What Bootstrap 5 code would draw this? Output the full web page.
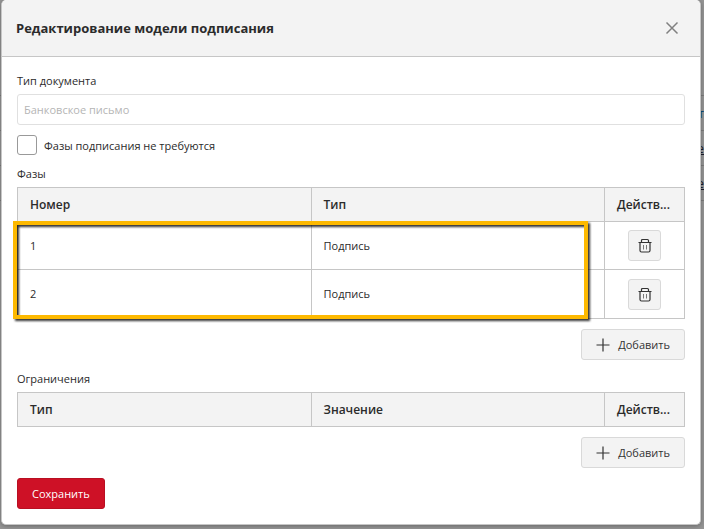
<!DOCTYPE html>
<html lang="ru">
<head>
<meta charset="utf-8">
<meta name="viewport" content="width=device-width, initial-scale=1">
<title>Редактирование модели подписания</title>
<link href="https://cdn.jsdelivr.net/npm/bootstrap@5.3.0/dist/css/bootstrap.min.css" rel="stylesheet">
<style>
  body { font-family: "Open Sans", "Noto Sans", sans-serif; font-size: 11px; line-height: 18px; color: #2b2b2b; background: #949494; min-height: 100vh; }
  .page-rows { position: absolute; inset: 95px 0 auto 0; color: #1b1b2b; font-size: 12px; }
  .page-line { height: 35px; border-top: 1px solid #7c7c7c; padding-top: 9px; }
  .page-line a { color: #1b1b2b; }
  .page-line:first-child a { color: #0d4a75; text-decoration: none; }
  .page-line:last-child { height: 1px; padding: 0; }
  .dialog-box { position: relative; margin: 0 3px 0 1px; width: auto; background: #fff; border: 1px solid #c6c6c6; border-top: 0; border-radius: 5px; box-shadow: 0 1px 4px rgba(0,0,0,.3); color: #2b2b2b; }
  .dialog-head { height: 57px; padding: 0 20px 0 14px; background: #f3f3f3; border-bottom: 1px solid #c6c6c6; border-radius: 5px 5px 0 0; }
  .dialog-title { font-size: 13px; line-height: 20px; font-weight: 700; }
  .close-btn, .close-btn:hover { color: #808080; line-height: 0; }
  .dialog-main { padding: 15px; }
  .doc-input.form-control { height: 31px; font-size: 11px; padding: 0 6px; border: 1px solid #e0e0e0; border-radius: 3px; background: #fff; color: #b5b5b5; }
  .check-line { gap: 7px; margin: 9px 0 10px; }
  .check-line label { padding-top: 3px; }
  .phase-check.form-check-input { width: 20px; height: 20px; margin: 0; border: 1px solid #999; border-radius: 3px; }
  .grid.table { table-layout: fixed; margin: 0; color: #2b2b2b; border-color: #c6c6c6; font-size: 11px; }
  .grid th, .grid td { padding: 0 12px; vertical-align: middle; border: 1px solid #c6c6c6; background: #fff; }
  .grid thead th { height: 34px; background: #f3f3f3; font-size: 12px; font-weight: 600; }
  .grid td { height: 48px; }
  .grid tr:last-child td { height: 49px; }
  .grid thead .cut-head { padding-right: 0; }
  .col-act { width: 80px; }
  .btn-soft { background: #f3f3f3; border: 1px solid #d9d9d9; border-radius: 3px; color: #333; font-size: 11px; line-height: 18px; }
  .btn-icon { width: 33px; height: 31px; padding: 0; }
  .btn-icon svg { display: block; margin: auto; }
  .btn-add { height: 31px; padding: 0 14px; }
  .btn-save { height: 31px; padding: 0 14px; font-size: 11px; line-height: 18px; color: #fff; background: #ce1126; border: 1px solid #b90f22; border-radius: 3px; }
  .add-line { margin: 10px 0; }
  .frame { position: absolute; left: -4px; right: 97px; top: 34px; bottom: 0; border: 4px solid #fdb900; filter: drop-shadow(2px 2px 1px rgba(0,0,0,.8)); pointer-events: none; }
</style>
</head>
<body>
<div class="page-rows">
  <div class="page-line d-flex justify-content-end"><a href="#">т</a></div>
  <div class="page-line d-flex justify-content-end"><a href="#">е</a></div>
  <div class="page-line d-flex justify-content-end"><a href="#">е</a></div>
  <div class="page-line"></div>
</div>
<div class="modal-content dialog-box" role="dialog" aria-labelledby="dlg-title">
  <div class="modal-header dialog-head">
    <h1 class="modal-title dialog-title" id="dlg-title">Редактирование модели подписания</h1>
    <button type="button" class="btn p-0 border-0 close-btn" aria-label="Закрыть">
      <svg width="16" height="16" viewBox="0 0 16 16" fill="none" stroke="currentColor" stroke-width="1.5"><path d="M2.5 2.5l11 11M13.5 2.5l-11 11"/></svg>
    </button>
  </div>
  <div class="modal-body dialog-main">
    <label for="doc-type" class="d-block mb-1">Тип документа</label>
    <input id="doc-type" type="text" class="form-control doc-input" value="Банковское письмо" disabled>
    <div class="d-flex align-items-center check-line">
      <input class="form-check-input phase-check" type="checkbox" id="no-phases">
      <label for="no-phases">Фазы подписания не требуются</label>
    </div>
    <div class="mb-1">Фазы</div>
    <div class="position-relative">
      <table class="table grid">
        <colgroup><col><col><col class="col-act"></colgroup>
        <thead><tr><th>Номер</th><th>Тип</th><th class="cut-head">Действ...</th></tr></thead>
        <tbody>
          <tr><td>1</td><td>Подпись</td><td class="text-center"><button type="button" class="btn btn-soft btn-icon" aria-label="Удалить"><svg width="14" height="15" viewBox="0 0 14 15" fill="none" stroke="#333"><path d="M.5 4.500h13M3.500 4V2.500q0-1 1-1h5q1 0 1 1V4M2 5v7.500q0 1.500 1.500 1.500h7q1.500 0 1.500-1.500V5" stroke-width="1.200"/><path d="M5.500 7v4.500M8.500 7v4.500" stroke="#777"/></svg></button></td></tr>
          <tr><td>2</td><td>Подпись</td><td class="text-center"><button type="button" class="btn btn-soft btn-icon" aria-label="Удалить"><svg width="14" height="15" viewBox="0 0 14 15" fill="none" stroke="#333"><path d="M.5 4.500h13M3.500 4V2.500q0-1 1-1h5q1 0 1 1V4M2 5v7.500q0 1.500 1.500 1.500h7q1.500 0 1.500-1.500V5" stroke-width="1.200"/><path d="M5.500 7v4.500M8.500 7v4.500" stroke="#777"/></svg></button></td></tr>
        </tbody>
      </table>
      <div class="frame"></div>
    </div>
    <div class="d-flex justify-content-end add-line">
      <button type="button" class="btn btn-soft btn-add d-flex align-items-center gap-2"><svg width="14" height="14" viewBox="0 0 14 14" stroke="#333" stroke-width="1.200"><path d="M.5 7h13M7 .5v13"/></svg>Добавить</button>
    </div>
    <div class="mb-1">Ограничения</div>
    <table class="table grid">
      <colgroup><col><col><col class="col-act"></colgroup>
      <thead><tr><th>Тип</th><th>Значение</th><th class="cut-head">Действ...</th></tr></thead>
    </table>
    <div class="d-flex justify-content-end add-line">
      <button type="button" class="btn btn-soft btn-add d-flex align-items-center gap-2"><svg width="14" height="14" viewBox="0 0 14 14" stroke="#333" stroke-width="1.200"><path d="M.5 7h13M7 .5v13"/></svg>Добавить</button>
    </div>
    <button type="button" class="btn btn-save">Сохранить</button>
  </div>
</div>
<script src="https://cdn.jsdelivr.net/npm/bootstrap@5.3.0/dist/js/bootstrap.bundle.min.js"></script>
</body>
</html>
